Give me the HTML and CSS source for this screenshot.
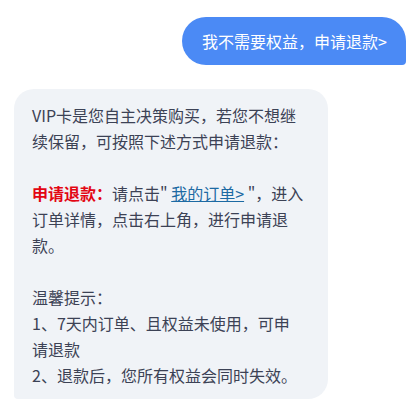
FILE: index.html
```html
<!DOCTYPE html>
<html lang="zh-CN">
<head>
<meta charset="utf-8">
<link rel="stylesheet" href="styles.css">
</head>
<body>
<div class="chat">
  <div class="row row-right">
    <div class="bubble bubble-user">我不需要权益，申请退款&gt;</div>
  </div>
  <div class="row row-left">
    <div class="bubble bubble-bot">
      <p class="para">VIP卡是您自主决策购买，若您不想继续保留，可按照下述方式申请退款：</p>
      <p class="para"><span class="hl">申请退款：</span>请点击" <a class="link" href="#">我的订单&gt;</a> "，进入订单详情，点击右上角，进行申请退款。</p>
      <p class="para">温馨提示：<br>1、7天内订单、且权益未使用，可申<br>请退款<br>2、退款后，您所有权益会同时失效。</p>
    </div>
  </div>
</div>
</body>
</html>
```
FILE: styles.css
```css
html, body {
  margin: 0;
  padding: 0;
  background: #ffffff;
}
body {
  font-family: "Noto Sans CJK SC", "Noto Sans", sans-serif;
  font-size: 16px;
  color: #3c4255;
}
.chat {
  display: flex;
  flex-direction: column;
  gap: 24px;
  padding: 17px 10px 0 14px;
}
.row {
  display: flex;
}
.row-right {
  justify-content: flex-end;
}
.row-left {
  justify-content: flex-start;
}
.bubble {
  box-sizing: border-box;
}
.bubble-user {
  background: #4b8af5;
  color: #ffffff;
  height: 48px;
  line-height: 48px;
  padding: 0 19px 0 20px;
  border-radius: 24px 24px 4px 24px;
  white-space: nowrap;
}
.bubble-bot {
  width: 314px;
  background: #f0f3f7;
  border-radius: 20px 20px 20px 4px;
  padding: 13px 18px 11px 18px;
  line-height: 26px;
}
.para {
  margin: 0 0 26px 0;
}
.para:last-child {
  margin-bottom: 0;
}
.hl {
  color: #e30613;
  font-weight: 700;
}
.link {
  color: #1c6aa3;
  text-decoration: underline;
}
```
